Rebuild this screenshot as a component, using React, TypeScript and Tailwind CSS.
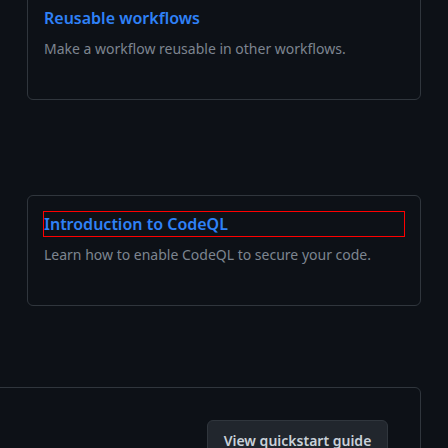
import React from "react";

export default function App() {
  return (
    <div
      className="w-[448px] h-[448px] overflow-hidden bg-[#0d1117]"
      style={{ fontFamily: '"Noto Sans", "Liberation Sans", sans-serif' }}
    >
      <div className="-mt-[11px] flex flex-col">
        <div className="ml-[27px] w-[394px] h-[111px] rounded-md border border-[#30363d] p-4">
          <h3 className="text-[16px] leading-6 font-semibold text-[#2f81f7]">Reusable workflows</h3>
          <p className="mt-2 text-[14px] leading-[21px] text-[#7d8590]">
            Make a workflow reusable in other workflows.
          </p>
        </div>
        <div className="mt-[95px] ml-[27px] w-[394px] h-[111px] rounded-md border border-[#30363d] p-4">
          <h3 className="text-[16px] leading-6 font-semibold text-[#2f81f7] outline outline-1 outline-[#ff0000]">
            Introduction to CodeQL
          </h3>
          <p className="mt-2 text-[14px] leading-[21px] text-[#7d8590]">
            Learn how to enable CodeQL to secure your code.
          </p>
        </div>
        <div className="mt-[81px] -ml-[20px] w-[441px] h-[120px] rounded-md border border-[#30363d] p-8 flex justify-end">
          <button className="h-10 w-[181px] rounded-md border border-[#30363d] bg-[#21262d] text-[14px] font-semibold text-[#c9d1d9] flex items-center justify-center">
            View quickstart guide
          </button>
        </div>
      </div>
    </div>
  );
}
